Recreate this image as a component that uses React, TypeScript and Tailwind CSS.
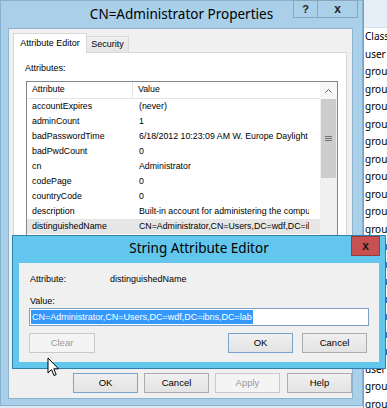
import React from 'react';

const ui = "font-['Liberation_Sans',Arial,sans-serif]";
const caption = "font-['Noto_Sans','Open_Sans',sans-serif]";

const attributes: [string, string][] = [
  ['accountExpires', '(never)'],
  ['adminCount', '1'],
  ['badPasswordTime', '6/18/2012 10:23:09 AM W. Europe Daylight Time'],
  ['badPwdCount', '0'],
  ['cn', 'Administrator'],
  ['codePage', '0'],
  ['countryCode', '0'],
  ['description', 'Built-in account for administering the computer/domain'],
  ['distinguishedName', 'CN=Administrator,CN=Users,DC=wdf,DC=ibns,DC=lab'],
  ['dSCorePropagationData', '5/16/2012 11:35:44 PM W. Europe Daylight Time'],
  ['givenName', '<not set>'],
  ['instanceType', '0x4 = ( WRITE )'],
];

const backgroundRows = [
  'Class', 'user', 'group', 'group', 'group', 'group', 'group', 'group', 'group', 'group', 'group', 'group',
  'group', 'group', 'group', 'group', 'group', 'group', 'group', 'user', 'group', 'group',
];

function Button({ label, disabled, primary, width = 'w-[65px]' }: { label: string; disabled?: boolean; primary?: boolean; width?: string }) {
  return (
    <div
      className={`${width} h-[20px] flex items-center justify-center border text-[9.5px] ${
        disabled
          ? 'border-[#c9c9c9] bg-[#f4f4f4] text-[#9a9a9a]'
          : primary
          ? 'border-[#7da2ce] bg-gradient-to-b from-[#f0f0f0] to-[#e3e3e3] text-black'
          : 'border-[#acacac] bg-gradient-to-b from-[#f0f0f0] to-[#e3e3e3] text-black'
      }`}
    >
      {label}
    </div>
  );
}

function AttributeList() {
  return (
    <div className="ml-[12px] mt-[7px] w-[312px] h-[270px] border border-[#828790] bg-white flex text-[8.8px]">
      <div className="flex-1 overflow-hidden">
        <div className="h-[17px] flex border-b border-[#e5e5e5] text-black">
          <div className="w-[106px] pl-[5px] flex items-center border-r border-[#e5e5e5]">Attribute</div>
          <div className="pl-[5px] flex items-center">Value</div>
        </div>
        {attributes.map(([name, value], i) => (
          <div key={name} className={`h-[15px] flex items-center ${i === 8 ? 'bg-[#e6e6e6]' : ''}`}>
            <div className="w-[107px] pl-[5px] whitespace-nowrap overflow-hidden">{name}</div>
            <div className="w-[175px] pl-[5px] whitespace-nowrap overflow-hidden">{value}</div>
          </div>
        ))}
      </div>
      <div className="w-[17px] bg-[#f0f0f0] flex flex-col">
        <div className="h-[17px] flex items-center justify-center bg-[#f7f7f7]">
          <svg width="7" height="4" viewBox="0 0 7 4">
            <path d="M0.5 3.5 L3.5 0.5 L6.5 3.5" fill="none" stroke="#606060" strokeWidth="1" />
          </svg>
        </div>
        <div className="mx-[1px] h-[79px] bg-[#cdcdcd] flex items-center justify-center">
          <svg width="7" height="5" viewBox="0 0 7 5">
            <path d="M0 0.5 H7 M0 2.5 H7 M0 4.5 H7" stroke="#707070" strokeWidth="1" />
          </svg>
        </div>
      </div>
    </div>
  );
}

function PropertiesWindow() {
  return (
    <div className={`w-[363px] h-[406px] shrink-0 flex flex-col border border-[#88b2d2] bg-[#a9cfe9] ${ui}`}>
      <div className="h-[27px] relative flex items-center justify-center">
        <span className={`${caption} text-[13.5px] text-black -mt-[1px]`}>CN=Administrator Properties</span>
        <div className="absolute top-[-1px] right-[4px] flex">
          <div className="w-[25px] h-[18px] border border-[#8aa6bd] flex items-center justify-center text-[11px] font-bold text-[#222]">?</div>
          <div className="w-[40px] h-[18px] border border-l-0 border-[#8aa6bd] flex items-center justify-center text-[12px] font-bold text-[#222]">x</div>
        </div>
      </div>
      <div className="flex-1 mx-[7px] mr-[9px] mb-[6px] bg-[#f0f0f0] border border-[#8fb3cf] flex flex-col text-[9px] text-black">
        <div className="ml-[4px] mt-[4px] h-[19px] flex items-end">
          <div className="w-[74px] h-[20px] bg-white border border-b-0 border-[#d9d9d9] flex items-center justify-center relative z-10 -mb-px">
            Attribute Editor
          </div>
          <div className="w-[42px] h-[16px] bg-gradient-to-b from-[#f0f0f0] to-[#e5e5e5] border border-l-0 border-b-0 border-[#d9d9d9] flex items-center justify-center">
            Security
          </div>
        </div>
        <div className="ml-[4px] mr-[5px] h-[314px] bg-white border border-[#d9d9d9]">
          <div className="ml-[11px] mt-[10px] h-[11px] leading-[11px]">Attributes:</div>
          <AttributeList />
        </div>
        <div className="mt-[7px] ml-[64px] flex gap-[6px]">
          <Button label="OK" primary />
          <Button label="Cancel" />
          <Button label="Apply" disabled />
          <div className="ml-[1px]">
            <Button label="Help" />
          </div>
        </div>
      </div>
    </div>
  );
}

function BackgroundWindow() {
  return (
    <div className={`flex-1 h-full bg-white border-l border-[#7f9db9] overflow-hidden ${caption}`}>
      <div className="h-[28px] bg-[#e6eff8] border-b border-[#d5e1ee]" />
      {backgroundRows.map((r, i) => (
        <div key={i} className="h-[17.5px] pl-[1px] flex items-center text-[10px] text-black whitespace-nowrap">
          {r}
        </div>
      ))}
    </div>
  );
}

function StringEditor() {
  return (
    <div className={`absolute left-[12px] top-[235px] w-[374px] h-[134px] border border-[#2f7fae] bg-[#62c6ed] flex flex-col ${ui}`}>
      <div className="h-[27px] relative flex items-center justify-center">
        <span className={`${caption} text-[13.5px] text-black -mt-[2px]`}>String Attribute Editor</span>
        <div className="absolute top-0 right-[5px] w-[29px] h-[20px] bg-[#c75050] border border-[#9b3b3b] flex items-center justify-center text-[12px] font-bold text-[#1a1a1a]">
          x
        </div>
      </div>
      <div className="flex-1 mx-[6px] mb-[6px] bg-[#f0f0f0] relative text-[9px] text-black">
        <div className="flex mt-[11px] h-[11px] leading-[11px]">
          <div className="ml-[11px] w-[80px]">Attribute:</div>
          <div>distinguishedName</div>
        </div>
        <div className="ml-[11px] mt-[11px] h-[11px] leading-[11px]">Value:</div>
        <div className="ml-[10px] mt-[1px] w-[340px] h-[18px] border border-[#7f9fc3] bg-white flex items-center pl-[1px]">
          <span className="bg-[#3399ff] text-white h-[14px] leading-[14px] px-[1px]">
            CN=Administrator,CN=Users,DC=wdf,DC=ibns,DC=lab
          </span>
        </div>
        <div className="mt-[7px] ml-[10px] flex">
          <Button label="Clear" disabled width="w-[66px]" />
          <div className="ml-[133px] flex gap-[9px]">
            <Button label="OK" primary />
            <Button label="Cancel" />
          </div>
        </div>
      </div>
    </div>
  );
}

function Cursor() {
  return (
    <svg className="absolute left-[47px] top-[357px]" width="13" height="21" viewBox="0 0 13 21">
      <path
        d="M1 1 L1 16 L4.5 12.5 L7 18.5 L9.2 17.6 L6.8 11.8 L11.5 11.8 Z"
        fill="white"
        stroke="black"
        strokeWidth="1"
        strokeLinejoin="round"
      />
    </svg>
  );
}

export default function App() {
  return (
    <div className="relative w-[387px] h-[408px] overflow-hidden bg-[#dfe9f3] flex">
      <PropertiesWindow />
      <BackgroundWindow />
      <StringEditor />
      <Cursor />
    </div>
  );
}
